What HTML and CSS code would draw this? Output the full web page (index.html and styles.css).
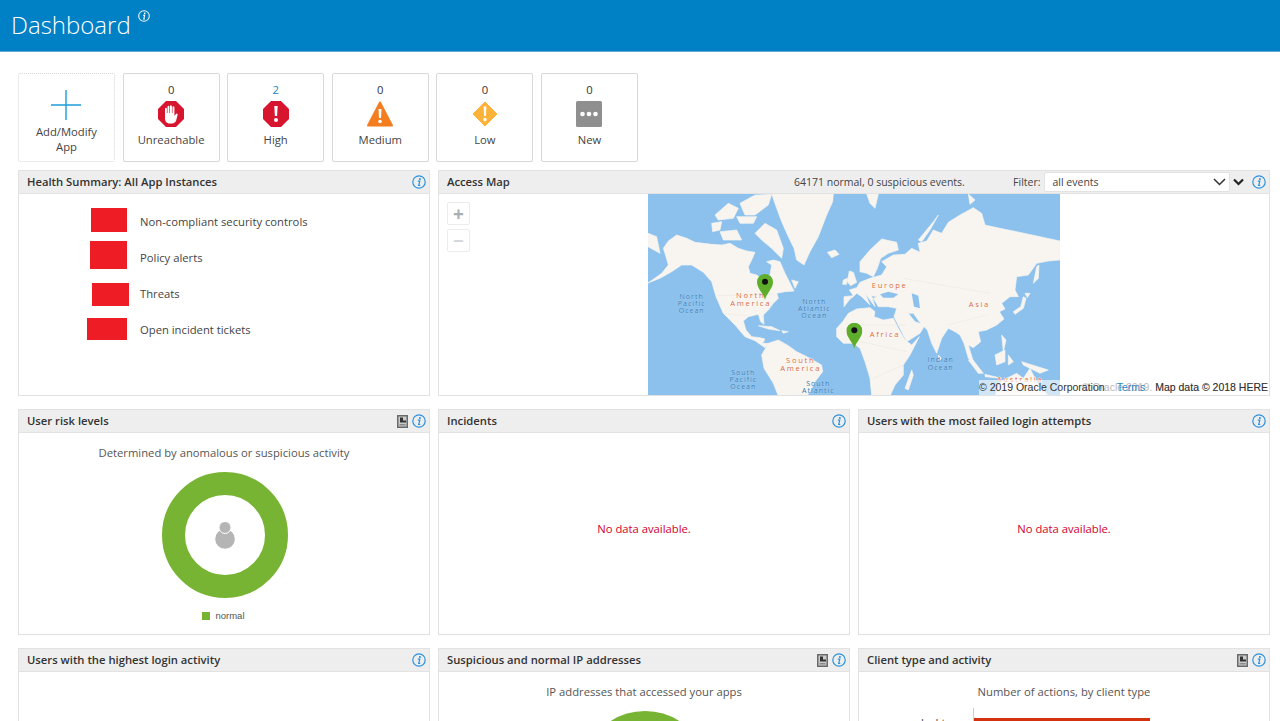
FILE: index.html
```html
<!DOCTYPE html>
<html lang="en">
<head>
<meta charset="UTF-8" />
<title>Dashboard</title>
<link rel="stylesheet" href="styles.css">
</head>
<body>

<svg class="defs" width="0" height="0" aria-hidden="true">
  <symbol id="info" viewBox="0 0 14 14">
    <circle cx="7" cy="7" r="6.200" fill="none" stroke="currentColor" stroke-width="1.200" />
    <circle cx="7.900" cy="3.900" r="1" fill="currentColor" />
    <path d="M5.800 6.100h2L6.700 10.400h1.500" fill="none" stroke="currentColor" stroke-width="1.200" />
  </symbol>
  <symbol id="export" viewBox="0 0 11 13">
    <rect width="11" height="13" fill="#6a6a6a" />
    <rect x="1.500" y="1.500" width="8" height="10" fill="#ccc" />
    <path d="M3 2.500h3v3h3v2H3z" fill="#333" />
    <rect x="2.500" y="9" width="6" height="1.500" fill="#888" />
  </symbol>
  <symbol id="pin" viewBox="0 0 48 78">
    <path d="M24 78C20 58 0 44 0 24a24 24 0 0 1 48 0C48 44 28 58 24 78z" fill="#5fae2b" />
    <circle cx="24" cy="23" r="9" fill="#111" />
  </symbol>
</svg>

<header class="page-header">
  <h1>Dashboard</h1>
  <svg class="title-info"><use href="#info" /></svg>
</header>

<main class="content">
  <div class="tiles">
    <a class="tile tile-add">
      <svg class="plus" width="30" height="30" viewBox="0 0 30 30"><path d="M15 0v30M0 15h30" stroke="#1c9dd8" stroke-width="1.400" /></svg>
      <span>Add/Modify<br>App</span>
    </a>
    <a class="tile">
      <span class="count">0</span>
      <svg class="sev" viewBox="0 0 26 26">
        <path d="M8 0h10l8 8v10l-8 8H8l-8-8V8z" fill="#d8152f" />
        <path d="M7 13V7.500a1 1 0 0 1 1.900 0V12h.6V5.500a1 1 0 0 1 1.900 0V12h.6V5a1 1 0 0 1 1.900 0v7h.6V6a1 1 0 0 1 1.900 0v9l1.500-2a1 1 0 0 1 1.600 1.200L18 20c-1 1.500-2 2.500-4 2.500h-2c-3 0-5-2-5-5z" fill="#fff" />
      </svg>
      <span>Unreachable</span>
    </a>
    <a class="tile">
      <span class="count count-hit">2</span>
      <svg class="sev" viewBox="0 0 26 26">
        <path d="M8 0h10l8 8v10l-8 8H8l-8-8V8z" fill="#d8152f" />
        <path d="M11.300 5h3.400l-.6 10h-2.200z" fill="#fff" /><circle cx="13" cy="19" r="2" fill="#fff" />
      </svg>
      <span>High</span>
    </a>
    <a class="tile">
      <span class="count">0</span>
      <svg class="sev" viewBox="0 0 26 26">
        <path d="M13 1.500l12 23H1z" fill="#f47d20" stroke="#f47d20" stroke-width="2" stroke-linejoin="round" />
        <path d="M11.500 8h3l-.5 9h-2z" fill="#fff" /><circle cx="13" cy="20.500" r="1.800" fill="#fff" />
      </svg>
      <span>Medium</span>
    </a>
    <a class="tile">
      <span class="count">0</span>
      <svg class="sev" viewBox="0 0 26 26">
        <path d="M13 1l12 12-12 12L1 13z" fill="#fdb23a" stroke="#fdb23a" stroke-linejoin="round" />
        <path d="M11.600 5.500h2.800l-.5 9.500h-1.800z" fill="#fff" /><circle cx="13" cy="18.500" r="1.700" fill="#fff" />
      </svg>
      <span>Low</span>
    </a>
    <a class="tile">
      <span class="count">0</span>
      <svg class="sev" viewBox="0 0 26 26">
        <rect width="26" height="26" rx="1.500" fill="#8f8f8f" />
        <circle cx="6.500" cy="13" r="2.300" fill="#fff" /><circle cx="13" cy="13" r="2.300" fill="#fff" /><circle cx="19.500" cy="13" r="2.300" fill="#fff" />
      </svg>
      <span>New</span>
    </a>
  </div>

  <div class="panels">
    <section class="panel">
      <div class="panel-head">
        <h2>Health Summary: All App Instances</h2>
        <svg class="info"><use href="#info" /></svg>
      </div>
      <div class="panel-body health">
        <div class="health-row"><i class="bar" style="width:36px;height:24px"></i><span>Non-compliant security controls</span></div>
        <div class="health-row"><i class="bar" style="width:37px;height:28px"></i><span>Policy alerts</span></div>
        <div class="health-row"><i class="bar" style="width:37px;height:23px"></i><span>Threats</span></div>
        <div class="health-row"><i class="bar" style="width:40px;height:22px"></i><span>Open incident tickets</span></div>
      </div>
    </section>

    <section class="panel panel-wide">
      <div class="panel-head">
        <h2>Access Map</h2>
        <span class="event-count">64171 normal, 0 suspicious events.</span>
        <label class="filter-label">Filter:</label>
        <div class="filter-select">
          <span>all events</span>
          <svg width="13" height="8" viewBox="0 0 13 8"><path d="M1 1l5.500 5.500L12 1" fill="none" stroke="#333" stroke-width="1.500" /></svg>
        </div>
        <svg class="collapse" width="11" height="8" viewBox="0 0 11 8"><path d="M1 1.500l4.500 4.500L10 1.500" fill="none" stroke="#222" stroke-width="2.200" /></svg>
        <svg class="info"><use href="#info" /></svg>
      </div>
      <div class="panel-body map-body">
        <div class="zoom-btns">
          <span class="zoom-btn">+</span>
          <span class="zoom-btn">&minus;</span>
        </div>
        <svg class="world" width="412" height="202" viewBox="24 87 1236 606">
          <rect x="24" y="87" width="1236" height="606" fill="#8bc1ec" />
          <g class="land">
            <!-- north america -->
            <path d="M70 250L85 228 110 210 140 220 165 232 190 235 215 238 245 240 270 235 295 250 320 258 345 262 335 285 325 305 330 325 350 330 370 345 390 330 395 300 380 290 400 285 420 290 435 325 462 378 435 380 410 385 415 400 400 415 385 435 370 450 372 478 362 470 355 448 325 455 310 468 318 495 335 515 360 518 375 522 368 535 385 535 375 548 345 527 315 515 285 480 250 445 228 395 215 350 190 322 155 300 125 300 95 320 60 340 24 354 65 325 85 300 78 275z" />
            <path d="M345 205L375 175 410 195 430 250 425 280 395 250 365 225z" />
            <path d="M240 200L290 195 305 225 250 225z" />
            <path d="M215 175L245 170 240 195 218 200z" />
            <path d="M300 115L345 90 395 88 385 120 345 150 315 150z" />
            <path d="M290 155L350 155 340 175 300 175z" />
            <path d="M225 150L265 115 295 130 280 160 235 165z" />
            <path d="M455 345L475 350 465 370z" />
            <path d="M24 205L50 215 60 265 24 245z" />
            <path d="M355 482L395 485 420 497 385 492z" />
            <path d="M425 497L445 500 430 505z" />
            <!-- greenland, iceland, british isles, svalbard -->
            <path d="M395 87H580L578 110 560 150 535 215 510 260 492 300 470 285 462 250 445 215 425 170 410 130z" />
            <path d="M562 262L585 255 597 268 575 278z" />
            <path d="M622 350L628 318 640 322 650 352 632 362z" />
            <path d="M610 345L622 340 620 358 608 358z" />
            <path d="M680 87L715 87 705 130 690 115z" />
            <path d="M985 87L1005 105 990 118z" />
            <!-- south america -->
            <path d="M365 570L385 535 415 525 445 542 470 560 495 572 545 600 548 620 525 650 510 680 500 693H415L400 655 372 610z" />
            <!-- africa -->
            <path d="M608 470L625 445 650 432 690 428 705 440 702 455 730 465 760 460 775 490 795 525 815 540 838 515 810 570 790 600 790 630 765 660 750 693H695L690 640 675 590 660 550 640 535 610 535 590 515 590 490z" />
            <!-- scandinavia, eurasia -->
            <path d="M660 320L660 290 690 255 725 222 770 232 775 255 745 265 722 280 712 310 700 335 680 325z" />
            <path d="M612 425L612 395 640 392 628 375 650 368 660 352 690 340 725 330 740 305 725 290 760 270 795 268 815 250 840 262 835 235 860 228 880 195 905 205 925 172 960 150 1000 128 1025 145 1035 180 1080 190 1130 200 1200 215 1260 228V285L1225 288 1190 295 1165 330 1130 335 1125 375 1135 395 1110 395 1085 415 1095 432 1078 440 1092 462 1070 480 1040 495 1015 500 1022 530 1000 548 985 540 1000 590 985 580 972 535 960 510 945 500 925 490 905 520 890 565 875 535 862 495 838 470 820 445 805 445 825 470 855 480 840 505 800 530 785 500 762 455 770 430 745 425 715 425 700 400 712 395 695 392 705 425 690 405 675 385 690 420 665 395 650 385 640 395 630 402z" />
            <!-- islands -->
            <path d="M835 225L880 170 895 150 870 195 845 230z" />
            <path d="M1120 440L1142 425 1150 395 1158 400 1150 430 1125 448z" />
            <path d="M1155 385L1170 385 1162 398z" />
            <path d="M1180 355L1190 305 1197 300 1195 340z" />
            <path d="M1085 510L1098 525 1090 560z" />
            <path d="M1065 570L1095 555 1095 590 1070 600z" />
            <path d="M995 580L1030 625 1015 625 985 585z" />
            <path d="M1035 628L1085 640 1035 635z" />
            <path d="M1105 570L1120 590 1105 600z" />
            <path d="M1145 590L1225 615 1200 625 1150 600z" />
            <path d="M1065 693L1080 650 1130 625 1150 640 1170 610 1190 650 1225 693z" />
            <path d="M795 670L815 615 820 630 805 675z" />
            <path d="M895 570L905 580 897 588z" />
          </g>
          <g fill="#8bc1ec">
            <path d="M720 388L745 380 775 388 760 398 730 398z" />
            <path d="M815 385L835 392 840 430 822 425z" />
          </g>
          <g fill="none" stroke="#e9e4dc" stroke-width="1.500">
            <path d="M228 392L400 388M250 445L320 452M640 480L800 480M640 525L800 560M790 340L1050 385M920 480L1040 450M700 640L790 600" />
          </g>
          <g class="map-land">
            <text x="332" y="400">North</text>
            <text x="332" y="424">America</text>
            <text x="749" y="370">Europe</text>
            <text x="1018" y="425">Asia</text>
            <text x="735" y="515">Africa</text>
            <text x="482" y="594">South</text>
            <text x="482" y="617">America</text>
            <text x="1140" y="650">Australia</text>
          </g>
          <g class="map-sea">
            <text x="155" y="403">North</text>
            <text x="155" y="424">Pacific</text>
            <text x="155" y="445">Ocean</text>
            <text x="523" y="416">North</text>
            <text x="523" y="437">Atlantic</text>
            <text x="523" y="459">Ocean</text>
            <text x="902" y="592">Indian</text>
            <text x="902" y="615">Ocean</text>
            <text x="310" y="629">South</text>
            <text x="310" y="650">Pacific</text>
            <text x="310" y="671">Ocean</text>
            <text x="535" y="664">South</text>
            <text x="535" y="685">Atlantic</text>
          </g>
          <use href="#pin" x="351" y="327" width="48" height="78" />
          <use href="#pin" x="619" y="473" width="48" height="78" />
        </svg>
        <div class="attribution">
          <span class="ghost">&copy; Oracle 2019. Map data &copy; 2018 HERE</span>
          <span>&copy; 2019 Oracle Corporation</span>
          <a>Terms</a>
          <span>Map data &copy; 2018 HERE</span>
        </div>
      </div>
    </section>

    <section class="panel">
      <div class="panel-head">
        <h2>User risk levels</h2>
        <svg class="export"><use href="#export" /></svg>
        <svg class="info"><use href="#info" /></svg>
      </div>
      <div class="panel-body chart-body">
        <p class="chart-title">Determined by anomalous or suspicious activity</p>
        <div class="donut">
          <svg width="22" height="28" viewBox="0 0 22 28">
            <circle cx="11" cy="18" r="9.800" fill="#b5b5b5" />
            <circle cx="11" cy="6.500" r="6" fill="#b5b5b5" stroke="#fff" />
          </svg>
        </div>
        <div class="legend"><i></i>normal</div>
      </div>
    </section>

    <section class="panel">
      <div class="panel-head">
        <h2>Incidents</h2>
        <svg class="info"><use href="#info" /></svg>
      </div>
      <div class="panel-body no-data">No data available.</div>
    </section>

    <section class="panel">
      <div class="panel-head">
        <h2>Users with the most failed login attempts</h2>
        <svg class="info"><use href="#info" /></svg>
      </div>
      <div class="panel-body no-data">No data available.</div>
    </section>

    <section class="panel">
      <div class="panel-head">
        <h2>Users with the highest login activity</h2>
        <svg class="info"><use href="#info" /></svg>
      </div>
      <div class="panel-body"></div>
    </section>

    <section class="panel">
      <div class="panel-head">
        <h2>Suspicious and normal IP addresses</h2>
        <svg class="export"><use href="#export" /></svg>
        <svg class="info"><use href="#info" /></svg>
      </div>
      <div class="panel-body chart-body">
        <p class="chart-title">IP addresses that accessed your apps</p>
        <div class="donut"></div>
      </div>
    </section>

    <section class="panel">
      <div class="panel-head">
        <h2>Client type and activity</h2>
        <svg class="export"><use href="#export" /></svg>
        <svg class="info"><use href="#info" /></svg>
      </div>
      <div class="panel-body chart-body">
        <p class="chart-title">Number of actions, by client type</p>
        <div class="client-chart">
          <span class="client-label">desktop</span>
          <div class="client-axis">
            <div class="client-bar">104034</div>
          </div>
        </div>
      </div>
    </section>
  </div>
</main>

</body>
</html>
```

FILE: styles.css
```css
html,
body {
  margin: 0;
  height: 721px;
  overflow: hidden;
}
body {
  background: #fff;
  font-family: "Open Sans", sans-serif;
  font-size: 11.250px;
  color: #444;
}
.defs {
  position: absolute;
}
.page-header {
  display: flex;
  align-items: flex-start;
  height: 52px;
  box-sizing: border-box;
  padding-left: 11px;
  background: #0080c5;
  border-bottom: 1px solid #5fa9d6;
  color: #fff;
}
.page-header h1 {
  margin: 8px 0 0;
  font-size: 24px;
  line-height: 34px;
  font-weight: 300;
}
.title-info {
  width: 12px;
  height: 12px;
  margin: 10px 0 0 7px;
}
.content {
  padding: 21px 10px 0 18px;
}
.tiles {
  display: flex;
  gap: 7.600px;
  margin-bottom: 8px;
}
.tile {
  display: flex;
  flex-direction: column;
  align-items: center;
  width: 97px;
  height: 89px;
  box-sizing: border-box;
  padding-top: 7px;
  border: 1px solid #d8d8d8;
  border-radius: 2px;
  text-align: center;
  line-height: 16px;
  color: #444;
}
.tile-add {
  border: 1px dotted #d8d8d8;
  line-height: 15px;
}
.plus {
  margin: 9px 2px 4px 0;
}
.count {
  line-height: 17px;
  color: #333;
}
.count-hit {
  color: #1a84c8;
}
.sev {
  width: 26px;
  height: 26px;
  margin: 3px 0 5px;
}
.panels {
  display: grid;
  grid-template-columns: repeat(3, 412px);
  grid-auto-rows: 226px;
  gap: 13px 8px;
}
.panel {
  display: flex;
  flex-direction: column;
  min-width: 0;
}
.panel-wide {
  grid-column: span 2;
}
.panel-head {
  display: flex;
  align-items: center;
  flex: none;
  height: 24px;
  box-sizing: border-box;
  padding: 0 3px 1px 8px;
  background: #eee;
  border: 1px solid #e2e2e2;
}
.panel-head h2 {
  flex: 1;
  margin: 0;
  font-size: 11.250px;
  font-weight: 600;
  color: #333;
}
.panel-wide h2 {
  flex: none;
  width: 347px;
}
.info {
  width: 14px;
  height: 14px;
  margin-top: 1px;
  color: #2c92dc;
}
.export {
  width: 11px;
  height: 13px;
  margin: 1px 4px 0 0;
}
.panel-body {
  position: relative;
  flex: 1;
  min-height: 0;
  border: 1px solid #e2e2e2;
  border-top: 0;
}
.event-count {
  font-size: 10.500px;
  color: #444;
}
.filter-label {
  margin: 0 3px 0 auto;
  font-size: 10.500px;
  color: #444;
}
.filter-select {
  display: flex;
  align-items: center;
  justify-content: space-between;
  width: 186px;
  height: 20px;
  box-sizing: border-box;
  padding: 1px 3px 0 8px;
  background: #fff;
  border: 1px solid #e2e2e2;
  border-radius: 2px;
  font-size: 10.500px;
}
.collapse {
  margin: 0 8px 0 3.500px;
}
.health {
  padding-top: 9px;
}
.health-row {
  display: flex;
  align-items: center;
  height: 36px;
  padding-left: 68px;
}
.bar {
  flex: none;
  background: #ee1c25;
}
.health-row:nth-child(1) .bar { margin: 0 13px 2px 4px; }
.health-row:nth-child(2) .bar { margin: 0 13px 4px 3px; }
.health-row:nth-child(3) .bar { margin: 0 11px -2px 5px; }
.health-row:nth-child(4) .bar { margin: 0 13px 0 0; }
.map-body {
  display: flex;
  justify-content: center;
  overflow: hidden;
}
.world {
  display: block;
}
.land {
  fill: #f8f5f0;
  stroke: #f8f5f0;
  stroke-width: 2px;
  stroke-linejoin: round;
}
.map-land text,
.map-sea text {
  font-family: "Open Sans", sans-serif;
  font-size: 21px;
  text-anchor: middle;
  paint-order: stroke;
}
.map-land text {
  fill: #d9673a;
  font-size: 23px;
  letter-spacing: 5px;
  stroke: #fff;
  stroke-width: 2px;
}
.map-sea text {
  fill: #2f78b8;
  letter-spacing: 3px;
  stroke: rgba(255, 255, 255, 0.5);
  stroke-width: 1px;
}
.zoom-btns {
  position: absolute;
  left: 8px;
  top: 8px;
  display: flex;
  flex-direction: column;
  gap: 4px;
}
.zoom-btn {
  display: flex;
  align-items: center;
  justify-content: center;
  width: 23px;
  height: 23px;
  box-sizing: border-box;
  border: 1px solid #ececec;
  border-radius: 2px;
  font-size: 19px;
  font-weight: 700;
  color: #a8b0b4;
}
.zoom-btn:last-child {
  color: #d4d8da;
}
.attribution {
  position: absolute;
  right: 1px;
  bottom: 0;
  display: flex;
  width: 289px;
  height: 15px;
  background: rgba(255, 255, 255, 0.6);
  font-family: "Liberation Sans", sans-serif;
  font-size: 10.500px;
  line-height: 15px;
  white-space: nowrap;
  color: #333;
}
.attribution a {
  position: relative;
  margin-left: 12px;
  color: #2c86c4;
}
.attribution a + span {
  margin-left: auto;
}
.attribution .ghost {
  position: absolute;
  right: 0;
  color: #bbb;
}
.attribution span:not(.ghost) {
  position: relative;
}
.chart-body {
  display: flex;
  flex-direction: column;
  align-items: center;
  overflow: hidden;
}
.chart-title {
  margin: 11px 0;
  line-height: 17px;
  color: #555;
}
.donut {
  display: flex;
  align-items: center;
  justify-content: center;
  flex: none;
  width: 126px;
  height: 126px;
  margin-left: 1px;
  box-sizing: border-box;
  border: 23px solid #78b433;
  border-radius: 50%;
}
.legend {
  display: flex;
  align-items: center;
  margin: 12px 0 0 -1px;
  font-family: "Liberation Sans", sans-serif;
  font-size: 9.500px;
  color: #555;
}
.legend i {
  width: 8px;
  height: 8px;
  margin-right: 5px;
  background: #78b433;
}
.no-data {
  display: flex;
  align-items: center;
  justify-content: center;
  padding-bottom: 11px;
  box-sizing: border-box;
  color: #d0002e;
}
.client-chart {
  display: flex;
  align-items: flex-start;
  align-self: flex-start;
  height: 40px;
  margin: -3px 0 0 58px;
}
.client-label {
  width: 40px;
  margin: 8px 16px 0 0;
  text-align: right;
  line-height: 14px;
}
.client-axis {
  padding-top: 10px;
  border-left: 1px solid #ccc;
}
.client-bar {
  width: 176px;
  height: 20px;
  padding-left: 8px;
  box-sizing: border-box;
  background: #d4320e;
  font-size: 10.500px;
  line-height: 14px;
  color: #fff;
}
```
